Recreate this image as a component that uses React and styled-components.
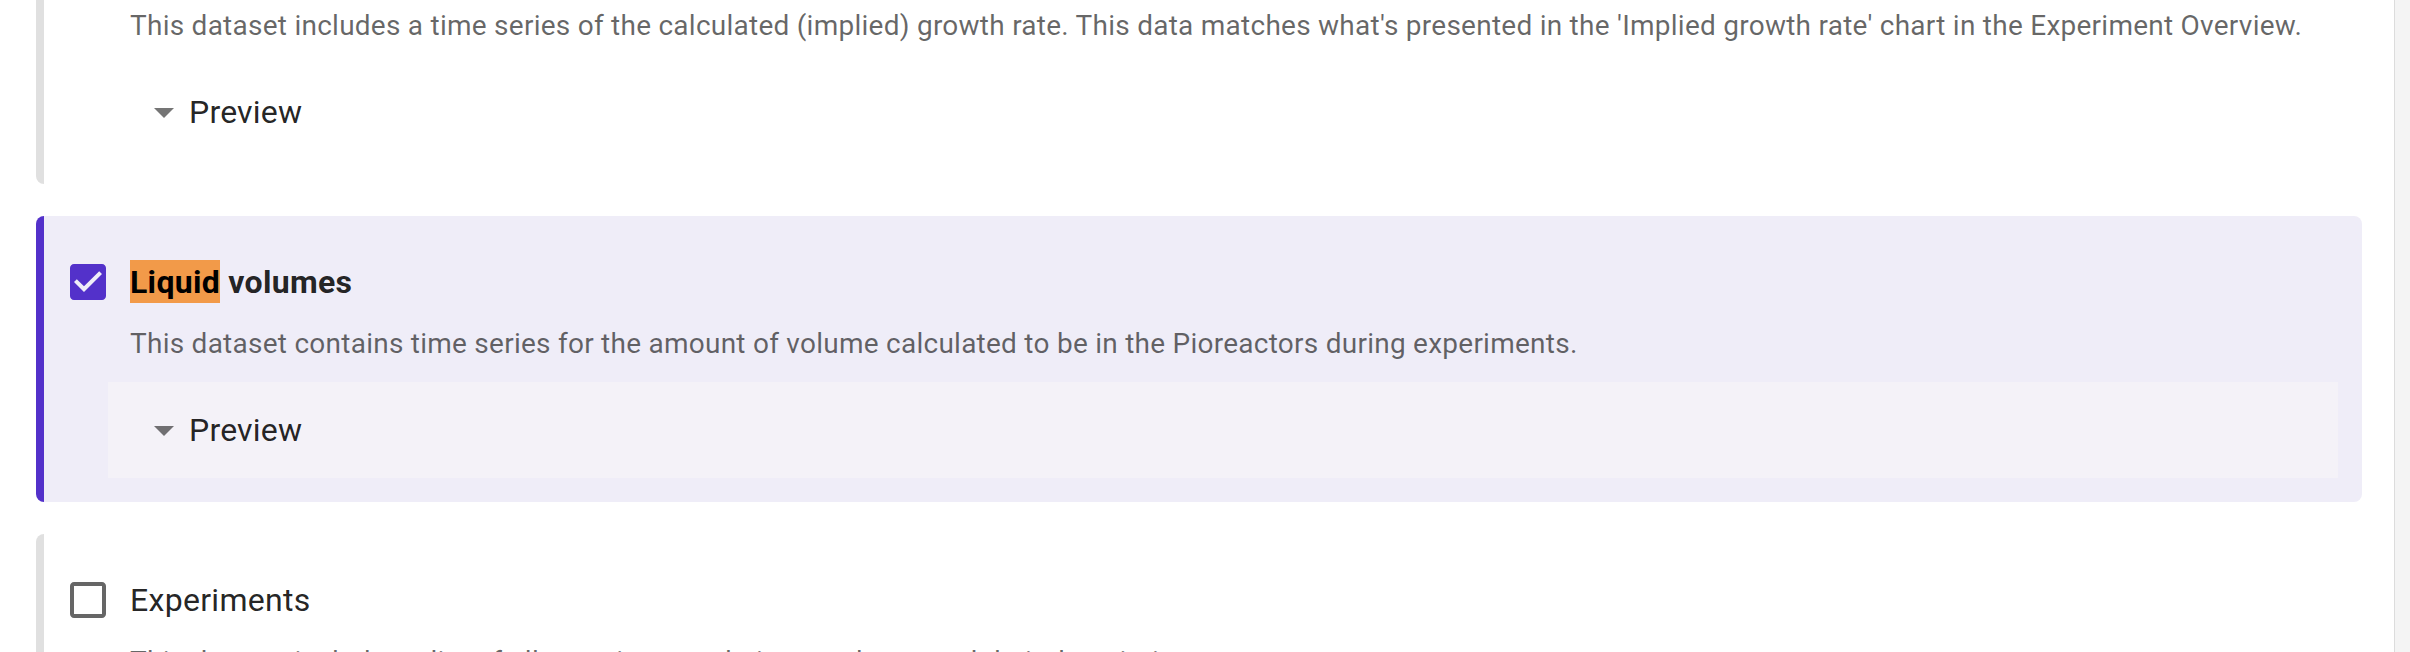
import React from "react";
import styled, { createGlobalStyle } from "styled-components";

const GlobalStyle = createGlobalStyle`
  html, body {
    margin: 0;
    padding: 0;
    background: #ffffff;
    font-family: Roboto, "Noto Sans", "Liberation Sans", sans-serif;
    -webkit-font-smoothing: antialiased;
  }
`;

const Viewport = styled.div`
  display: flex;
  height: 652px;
  overflow: hidden;
  background: #ffffff;
`;

const Main = styled.main`
  flex: 1;
  min-width: 0;
  padding: 0 32px 0 36px;
  overflow: hidden;
`;

const ScrollTrack = styled.div`
  width: 15px;
  flex: none;
  background: #f4f4f4;
  border-left: 1px solid #dcdcdc;
`;

const List = styled.div`
  display: flex;
  flex-direction: column;
  gap: 32px;
  margin-top: -102px;
`;

const Card = styled.section`
  border-left: 8px solid ${(p) => (p.$selected ? "#5331ca" : "#e0e0e0")};
  border-radius: 8px;
  background: ${(p) => (p.$selected ? "#efedf8" : "#ffffff")};
  padding: 24px;
  display: flex;
  flex-direction: column;
`;

const TitleRow = styled.label`
  display: flex;
  align-items: center;
  height: 84px;
  margin-left: -22px;
  cursor: pointer;
`;

const CheckBoxButton = styled.span`
  display: inline-flex;
  padding: 18px;
  flex: none;
  svg {
    width: 48px;
    height: 48px;
    display: block;
  }
`;

const Title = styled.span`
  font-size: 32px;
  line-height: 1.5;
  letter-spacing: 0.3px;
  color: rgba(0, 0, 0, 0.87);
  font-weight: ${(p) => (p.$bold ? 700 : 400)};
`;

const Highlight = styled.mark`
  background: #f29a49;
  color: #000000;
  padding: 3px 0 2px;
`;

const Description = styled.p`
  margin: 0 0 0 62px;
  font-size: 28px;
  line-height: 40px;
  letter-spacing: 0.25px;
  color: rgba(0, 0, 0, 0.6);
  white-space: nowrap;
`;

const PreviewBox = styled.div`
  margin: 18px 0 0 40px;
  height: 96px;
  padding-left: 32px;
  display: flex;
  align-items: center;
  background: ${(p) => (p.$selected ? "#f4f2f8" : "transparent")};
`;

const PreviewToggle = styled.button`
  display: flex;
  align-items: center;
  border: 0;
  background: none;
  padding: 0;
  cursor: pointer;
  font-family: inherit;
  font-size: 32px;
  line-height: 1.5;
  letter-spacing: 0.2px;
  color: rgba(0, 0, 0, 0.87);
  svg {
    width: 48px;
    height: 48px;
    display: block;
    margin-right: 1px;
  }
`;

const CheckedIcon = () => (
  <svg viewBox="0 0 24 24" aria-hidden="true">
    <path
      fill="#5331ca"
      d="M19 3H5c-1.11 0-2 .9-2 2v14c0 1.1.89 2 2 2h14c1.11 0 2-.9 2-2V5c0-1.1-.89-2-2-2zm-9 14l-5-5 1.41-1.41L10 14.17l7.59-7.59L19 8l-9 9z"
    />
  </svg>
);

const UncheckedIcon = () => (
  <svg viewBox="0 0 24 24" aria-hidden="true">
    <path
      fill="rgba(0,0,0,0.6)"
      d="M19 5v14H5V5h14m0-2H5c-1.1 0-2 .9-2 2v14c0 1.1.9 2 2 2h14c1.1 0 2-.9 2-2V5c0-1.1-.9-2-2-2z"
    />
  </svg>
);

const ArrowDropDown = () => (
  <svg viewBox="0 0 24 24" aria-hidden="true">
    <path fill="rgba(0,0,0,0.54)" d="M7 10l5 5 5-5z" />
  </svg>
);

const datasets = [
  {
    id: "growth",
    title: "Implied growth rate",
    description:
      "This dataset includes a time series of the calculated (implied) growth rate. This data matches what's presented in the 'Implied growth rate' chart in the Experiment Overview.",
    selected: false,
  },
  {
    id: "liquid",
    title: "volumes",
    highlight: "Liquid",
    description:
      "This dataset contains time series for the amount of volume calculated to be in the Pioreactors during experiments.",
    selected: true,
  },
  {
    id: "experiments",
    title: "Experiments",
    description:
      "This dataset includes a list of all experiments, their start dates, and their descriptions.",
    selected: false,
  },
];

function DatasetCard({ data }) {
  const { selected, title, highlight, description } = data;
  return (
    <Card $selected={selected}>
      <TitleRow>
        <CheckBoxButton>{selected ? <CheckedIcon /> : <UncheckedIcon />}</CheckBoxButton>
        <Title $bold={selected}>
          {highlight && (
            <>
              <Highlight>{highlight}</Highlight>{" "}
            </>
          )}
          {title}
        </Title>
      </TitleRow>
      <Description>{description}</Description>
      <PreviewBox $selected={selected}>
        <PreviewToggle type="button">
          <ArrowDropDown />
          Preview
        </PreviewToggle>
      </PreviewBox>
    </Card>
  );
}

export default function App() {
  return (
    <>
      <GlobalStyle />
      <Viewport>
        <Main>
          <List>
            {datasets.map((d) => (
              <DatasetCard key={d.id} data={d} />
            ))}
          </List>
        </Main>
        <ScrollTrack />
      </Viewport>
    </>
  );
}
